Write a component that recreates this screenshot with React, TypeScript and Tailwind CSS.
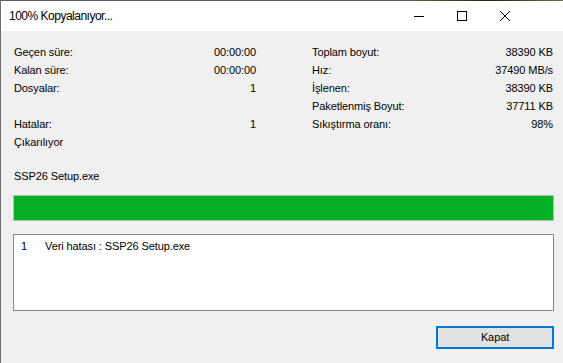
import React from "react";

const LEFT: [string, string][] = [
  ["Geçen süre:", "00:00:00"],
  ["Kalan süre:", "00:00:00"],
  ["Dosyalar:", "1"],
  ["", ""],
  ["Hatalar:", "1"],
];

const RIGHT: [string, string][] = [
  ["Toplam boyut:", "38390 KB"],
  ["Hız:", "37490 MB/s"],
  ["İşlenen:", "38390 KB"],
  ["Paketlenmiş Boyut:", "37711 KB"],
  ["Sıkıştırma oranı:", "98%"],
];

const Row = ({ label, value }: { label: string; value: string }) => (
  <div className="flex h-[18px] items-center justify-between">
    <span>{label}</span>
    <span>{value}</span>
  </div>
);

export default function App() {
  return (
    <div
      className="flex h-[363px] w-[563px] flex-col overflow-hidden border-l border-[#6e6e6e] bg-[#f0f0f0] text-[11px] tracking-[-0.1px] text-black"
      style={{ fontFamily: '"Liberation Sans", Arial, sans-serif' }}
    >
      {/* top strip of what sits behind the window */}
      <div className="flex h-px">
        <div className="flex-1 bg-[#5a5a5a]" />
        <div className="w-[148px] bg-gradient-to-r from-[#6b5a40] via-[#2a241c] to-[#7a6a50]" />
      </div>

      {/* Title bar */}
      <div className="flex h-[30px] items-center bg-white">
        <span className="pl-[8px] text-[12px] tracking-[-0.5px]">100% Kopyalanıyor...</span>
        <div className="ml-auto mr-[37px] flex h-full">
          <div className="flex w-[43px] items-center justify-center">
            <svg width="10" height="10" viewBox="0 0 10 10">
              <path d="M0 5.5h10" stroke="#000" strokeWidth="1" />
            </svg>
          </div>
          <div className="flex w-[43px] items-center justify-center">
            <svg width="10" height="10" viewBox="0 0 10 10">
              <rect x="0.5" y="0.5" width="9" height="9" fill="none" stroke="#000" strokeWidth="1" />
            </svg>
          </div>
          <div className="flex w-[43px] items-center justify-center">
            <svg width="10" height="10" viewBox="0 0 10 10">
              <path d="M0 0L10 10M10 0L0 10" stroke="#000" strokeWidth="1" />
            </svg>
          </div>
        </div>
      </div>

      {/* Body */}
      <div className="flex flex-1 flex-col pl-[12px] pr-[10px] pt-[12px]">
        <div className="flex pl-[1px]">
          <div className="flex w-[242px] flex-col">
            {LEFT.map(([l, v], i) => (
              <Row key={i} label={l} value={v} />
            ))}
            <div className="flex h-[18px] items-center">Çıkarılıyor</div>
          </div>
          <div className="ml-[56px] flex w-[241px] flex-col">
            {RIGHT.map(([l, v], i) => (
              <Row key={i} label={l} value={v} />
            ))}
          </div>
        </div>

        <div className="mt-[16px] flex h-[18px] items-center pl-[1px]">SSP26 Setup.exe</div>

        {/* Progress */}
        <div className="mt-[10px] h-[26px] w-[541px] border border-[#bcbcbc] bg-[#e6e6e6]">
          <div className="h-full w-full bg-[#06b025]" />
        </div>

        {/* Error list */}
        <div className="mt-[13px] h-[77px] w-[541px] border border-[#828790] bg-white pt-[2px]">
          <div className="flex h-[18px] items-center">
            <span className="w-[31px] pl-[7px]">1</span>
            <span>Veri hatası : SSP26 Setup.exe</span>
          </div>
        </div>

        <div className="mt-[15px] flex w-[541px] justify-end">
          <button className="flex h-[23px] w-[118px] items-center justify-center border-2 border-[#0078d7] bg-[#e1e1e1] text-[11px]">
            Kapat
          </button>
        </div>
      </div>
    </div>
  );
}
